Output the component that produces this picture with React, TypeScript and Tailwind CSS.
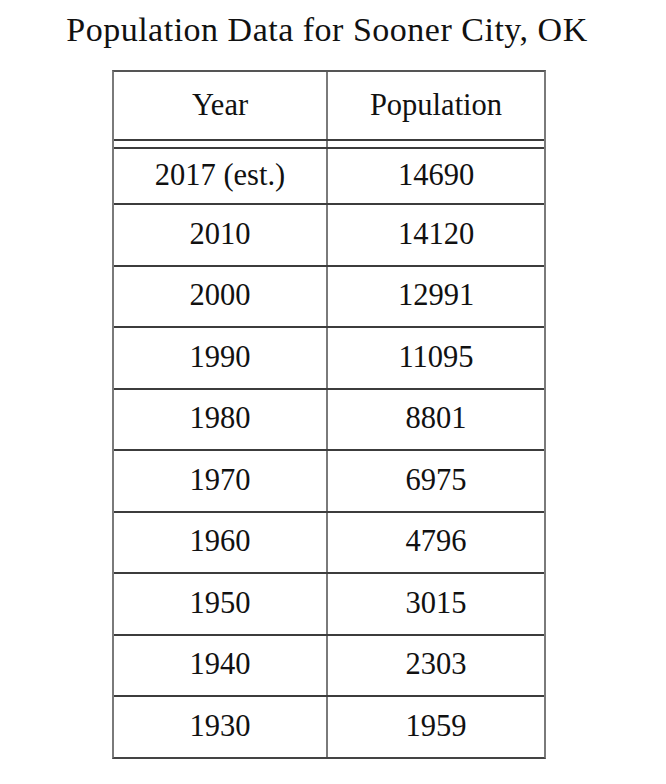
const rows: [string, string][] = [
  ['2010', '14120'],
  ['2000', '12991'],
  ['1990', '11095'],
  ['1980', '8801'],
  ['1970', '6975'],
  ['1960', '4796'],
  ['1950', '3015'],
  ['1940', '2303'],
  ['1930', '1959'],
];

export default function App() {
  return (
    <div className="min-h-screen bg-white text-[#111] font-['Liberation_Serif','Times_New_Roman',serif]">
      <div className="w-[654px] pt-[10px] text-center text-[34px] leading-[40px] tracking-[0.5px]">
        Population Data for Sooner City, OK
      </div>

      <div className="ml-[112px] mt-[20px] w-[434px] border-x-2 border-x-[#7a7a7a] border-t-2 border-t-[#555] border-b-2 border-b-[#444] text-[30.5px]">
        {/* header */}
        <div className="grid h-[67px] grid-cols-[214px_1fr]">
          <div className="flex items-center justify-center border-r-2 border-[#7a7a7a]">Year</div>
          <div className="flex items-center justify-center">Population</div>
        </div>

        {/* double rule */}
        <div className="grid h-[10px] grid-cols-[214px_1fr] border-y-2 border-[#3c3c3c]">
          <div className="border-r-2 border-[#7a7a7a]" />
          <div />
        </div>

        <div className="grid h-[56px] grid-cols-[214px_1fr] border-b-2 border-[#3c3c3c]">
          <div className="flex items-center justify-center border-r-2 border-[#7a7a7a]">2017 (est.)</div>
          <div className="flex items-center justify-center">14690</div>
        </div>

        {rows.map(([year, pop], i) => (
          <div
            key={year}
            className={
              i === rows.length - 1
                ? 'grid h-[59.5px] grid-cols-[214px_1fr]'
                : 'grid h-[61.5px] grid-cols-[214px_1fr] border-b-2 border-[#3c3c3c]'
            }
          >
            <div className="flex items-center justify-center border-r-2 border-[#7a7a7a]">{year}</div>
            <div className="flex items-center justify-center">{pop}</div>
          </div>
        ))}
      </div>
    </div>
  );
}
